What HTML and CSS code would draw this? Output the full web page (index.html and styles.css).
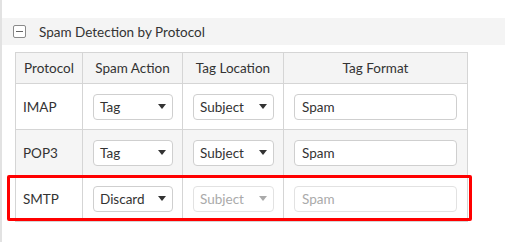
FILE: index.html
```html
<!DOCTYPE html>
<html>
<head>
  <title>Spam Detection by Protocol</title>
  <link rel="stylesheet" href="styles.css">
</head>
<body>

<div id="panel">

  <div class="section-head">
    <span class="toggle"><span class="toggle-bar"></span></span>
    <span class="section-title">Spam Detection by Protocol</span>
  </div>

  <table class="rules">
    <colgroup>
      <col class="col-proto">
      <col class="col-action">
      <col class="col-loc">
      <col class="col-format">
    </colgroup>
    <tr class="head-row">
      <th>Protocol</th>
      <th>Spam Action</th>
      <th>Tag Location</th>
      <th>Tag Format</th>
    </tr>
    <tr>
      <td class="proto">IMAP</td>
      <td><div class="dropdown action"><span>Tag</span><svg width="8" height="5" viewBox="0 0 8 5"><path d="M0 0H8L4 5Z"/></svg></div></td>
      <td><div class="dropdown location"><span>Subject</span><svg width="8" height="5" viewBox="0 0 8 5"><path d="M0 0H8L4 5Z"/></svg></div></td>
      <td><input class="format" type="text" value="Spam"></td>
    </tr>
    <tr class="alt">
      <td class="proto">POP3</td>
      <td><div class="dropdown action"><span>Tag</span><svg width="8" height="5" viewBox="0 0 8 5"><path d="M0 0H8L4 5Z"/></svg></div></td>
      <td><div class="dropdown location"><span>Subject</span><svg width="8" height="5" viewBox="0 0 8 5"><path d="M0 0H8L4 5Z"/></svg></div></td>
      <td><input class="format" type="text" value="Spam"></td>
    </tr>
    <tr>
      <td class="proto">SMTP</td>
      <td><div class="dropdown action"><span>Discard</span><svg width="8" height="5" viewBox="0 0 8 5"><path d="M0 0H8L4 5Z"/></svg></div></td>
      <td><div class="dropdown location disabled"><span>Subject</span><svg width="8" height="5" viewBox="0 0 8 5"><path d="M0 0H8L4 5Z"/></svg></div></td>
      <td><input class="format" type="text" value="Spam" disabled></td>
    </tr>
  </table>

  <div class="highlight"></div>

</div>

</body>
</html>
```

FILE: styles.css
```css
body {
  margin: 0;
  background: white;
  font-family: Lato, "Open Sans", sans-serif;
  font-size: 13px;
  color: #333;
}
#panel {
  position: relative;
  min-height: 242px;
  box-sizing: border-box;
  border-left: 2px solid #e2e2e2;
  padding-top: 18px;
}
.section-head {
  display: flex;
  align-items: center;
  height: 27px;
  padding-left: 11px;
  background: #f4f4f4;
}
.toggle {
  display: flex;
  align-items: center;
  justify-content: center;
  width: 13px;
  height: 13px;
  box-sizing: border-box;
  border: 1px solid #8a8a8a;
  border-radius: 2px;
  background: white;
}
.toggle-bar {
  width: 7px;
  height: 1px;
  background: #666;
}
.section-title {
  margin-left: 13px;
  font-size: 13.5px;
  color: #333;
}

.rules {
  margin: 7px 0 0 13px;
  border-collapse: collapse;
  width: 452px;
  table-layout: fixed;
  font-size: 13.5px;
}
.col-proto { width: 67px; }
.col-action { width: 100px; }
.col-loc { width: 101px; }
.col-format { width: 184px; }
.rules th,
.rules td {
  border: 1px solid #d5d5d5;
  padding: 0 0 0 10px;
}
.rules th {
  height: 30px;
  padding: 0;
  font-weight: normal;
  color: #333;
  text-align: center;
  white-space: nowrap;
}
.head-row {
  background: #f4f4f4;
}
.rules td {
  height: 45px;
}
.alt {
  background: #f5f5f5;
}
.rules td.proto {
  padding-left: 7px;
}

.dropdown {
  display: flex;
  align-items: center;
  justify-content: space-between;
  box-sizing: border-box;
  height: 26px;
  padding: 0 6px 0 6px;
  border: 1px solid #cfcfcf;
  border-radius: 4px;
  background: white;
  color: #333;
}
.dropdown svg {
  fill: #333;
}
.action { width: 80px; }
.location { width: 81px; }
.dropdown.disabled {
  border-color: #e2e2e2;
  color: #aaa;
}
.dropdown.disabled svg {
  fill: #aaa;
}
.format {
  display: block;
  box-sizing: border-box;
  width: 163px;
  height: 26px;
  padding: 0 7px;
  border: 1px solid #cfcfcf;
  border-radius: 4px;
  background: white;
  font-family: Lato, "Open Sans", sans-serif;
  font-size: 13.5px;
  color: #333;
}
.format:disabled {
  border-color: #e2e2e2;
  color: #aaa;
}

.highlight {
  position: absolute;
  left: 5px;
  top: 175px;
  width: 465px;
  height: 46px;
  box-sizing: border-box;
  border: 3px solid #f00;
  border-radius: 2px;
}
```
